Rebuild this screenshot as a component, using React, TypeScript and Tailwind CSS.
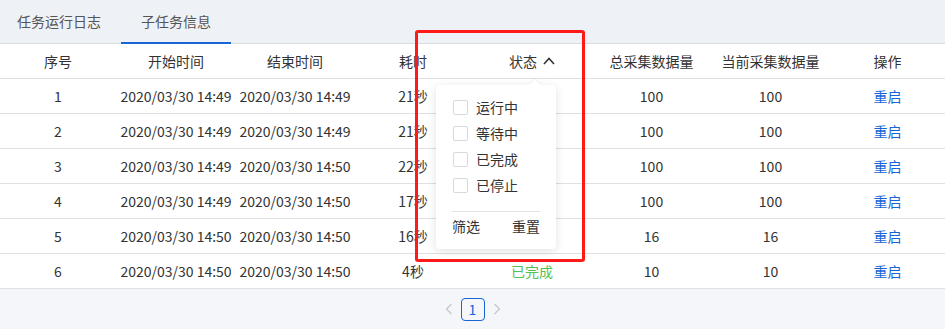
import React from "react";

const rows = [
  { no: 1, start: "2020/03/30 14:49", end: "2020/03/30 14:49", cost: "21秒", status: "", total: 100, cur: 100 },
  { no: 2, start: "2020/03/30 14:49", end: "2020/03/30 14:49", cost: "21秒", status: "", total: 100, cur: 100 },
  { no: 3, start: "2020/03/30 14:49", end: "2020/03/30 14:50", cost: "22秒", status: "", total: 100, cur: 100 },
  { no: 4, start: "2020/03/30 14:49", end: "2020/03/30 14:50", cost: "17秒", status: "", total: 100, cur: 100 },
  { no: 5, start: "2020/03/30 14:50", end: "2020/03/30 14:50", cost: "16秒", status: "", total: 16, cur: 16 },
  { no: 6, start: "2020/03/30 14:50", end: "2020/03/30 14:50", cost: "4秒", status: "已完成", total: 10, cur: 10 },
];

const grid = "grid grid-cols-[116px_120px_118px_118px_120px_119px_119px_1fr] items-center text-center";

function FilterPopover() {
  const opts = ["运行中", "等待中", "已完成", "已停止"];
  return (
    <div className="absolute left-[436px] top-[85px] w-[120px] h-[164px] bg-white rounded-[4px] shadow-[0_2px_10px_rgba(0,0,0,0.12)] px-4 pt-[14px]">
      <div className="absolute right-[17px] -top-[4px] w-2 h-2 bg-white rotate-45 shadow-[-1px_-1px_2px_rgba(0,0,0,0.05)]" />
      <div className="flex flex-col gap-[10px]">
        {opts.map((o) => (
          <label key={o} className="flex items-center h-[16px] text-[14px] text-[#333]">
            <span className="w-[15px] h-[15px] border border-[#d9d9d9] rounded-[2px] bg-white ml-[1px]" />
            <span className="ml-[8px]">{o}</span>
          </label>
        ))}
      </div>
      <div className="mt-[18px] border-t border-[#e4e4e4]" />
      <div className="flex justify-between mt-[4px] text-[14px] text-[#333]">
        <span>筛选</span>
        <span>重置</span>
      </div>
    </div>
  );
}

export default function App() {
  return (
    <div className="relative w-[945px] h-[329px] bg-[#f5f6fa] overflow-hidden font-['Noto_Sans_CJK_SC','Noto_Sans',sans-serif] text-[#333]">
      <div className="flex h-[44px] bg-[#eef1f6] border-b border-[#dcdcdc] text-[14px] text-[#555]">
        <div className="pl-[17px] pr-[20px] flex items-center">任务运行日志</div>
        <div className="px-[20px] flex items-center border-b-2 border-[#1565d8] -mb-px">子任务信息</div>
      </div>

      <div className="bg-white">
        <div className={`${grid} h-[35px] border-b border-[#e0e0e0] text-[14px]`}>
          <div>序号</div>
          <div>开始时间</div>
          <div>结束时间</div>
          <div>耗时</div>
          <div className="flex items-center justify-center gap-[6px]">
            <span>状态</span>
            <svg width="12" height="8" viewBox="0 0 12 8" fill="none" stroke="#333" strokeWidth="1.6">
              <path d="M1 7 L6 1.5 L11 7" />
            </svg>
          </div>
          <div>总采集数据量</div>
          <div>当前采集数据量</div>
          <div>操作</div>
        </div>
        {rows.map((r) => (
          <div key={r.no} className={`${grid} h-[35px] border-b border-[#e0e0e0] text-[14px]`}>
            <div>{r.no}</div>
            <div>{r.start}</div>
            <div>{r.end}</div>
            <div>{r.cost}</div>
            <div className="text-[#52c152]">{r.status}</div>
            <div>{r.total}</div>
            <div>{r.cur}</div>
            <div className="text-[#1565d8]">重启</div>
          </div>
        ))}
      </div>

      <div className="flex items-center justify-center h-[40px] gap-[8px] text-[14px]">
        <svg width="8" height="12" viewBox="0 0 8 12" fill="none" stroke="#c4c7cc" strokeWidth="1.3">
          <path d="M6.5 1 L1.5 6 L6.5 11" />
        </svg>
        <div className="w-[24px] h-[23px] flex items-center justify-center border border-[#1565d8] rounded-[4px] text-[#1565d8]">1</div>
        <svg width="8" height="12" viewBox="0 0 8 12" fill="none" stroke="#c4c7cc" strokeWidth="1.3">
          <path d="M1.5 1 L6.5 6 L1.5 11" />
        </svg>
      </div>

      <FilterPopover />

      <div className="absolute left-[415px] top-[30px] w-[170px] h-[232px] border-[3px] border-[#ff1a1a] rounded-[3px]" />
    </div>
  );
}
